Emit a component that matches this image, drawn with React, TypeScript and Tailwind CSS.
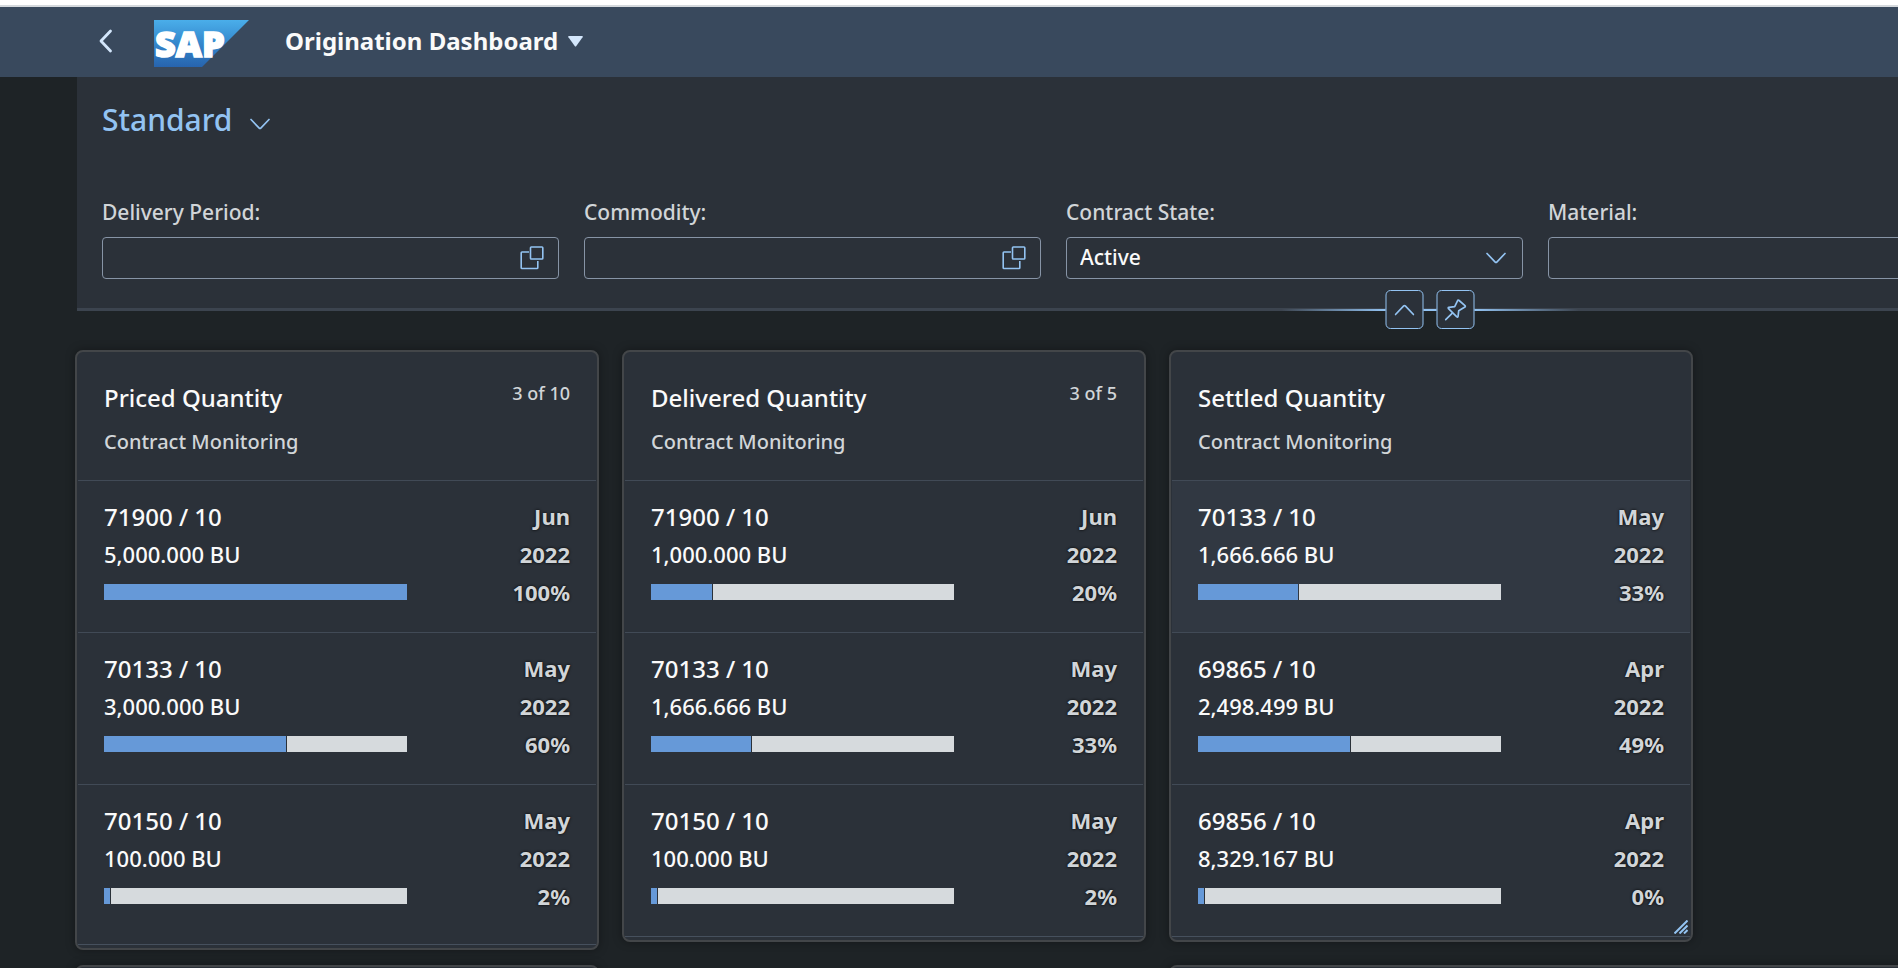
import React from "react";

type Item = { id: string; qty: string; month: string; year: string; pct: string; fill: number; active?: boolean };
type CardData = { title: string; subtitle: string; count?: string; items: Item[]; tall?: boolean; resizable?: boolean };

const CARDS: CardData[] = [
  {
    title: "Priced Quantity",
    subtitle: "Contract Monitoring",
    count: "3 of 10",
    tall: true,
    items: [
      { id: "71900 / 10", qty: "5,000.000 BU", month: "Jun", year: "2022", pct: "100%", fill: 100 },
      { id: "70133 / 10", qty: "3,000.000 BU", month: "May", year: "2022", pct: "60%", fill: 60 },
      { id: "70150 / 10", qty: "100.000 BU", month: "May", year: "2022", pct: "2%", fill: 2 },
    ],
  },
  {
    title: "Delivered Quantity",
    subtitle: "Contract Monitoring",
    count: "3 of 5",
    items: [
      { id: "71900 / 10", qty: "1,000.000 BU", month: "Jun", year: "2022", pct: "20%", fill: 20 },
      { id: "70133 / 10", qty: "1,666.666 BU", month: "May", year: "2022", pct: "33%", fill: 33 },
      { id: "70150 / 10", qty: "100.000 BU", month: "May", year: "2022", pct: "2%", fill: 2 },
    ],
  },
  {
    title: "Settled Quantity",
    subtitle: "Contract Monitoring",
    resizable: true,
    items: [
      { id: "70133 / 10", qty: "1,666.666 BU", month: "May", year: "2022", pct: "33%", fill: 33, active: true },
      { id: "69865 / 10", qty: "2,498.499 BU", month: "Apr", year: "2022", pct: "49%", fill: 50 },
      { id: "69856 / 10", qty: "8,329.167 BU", month: "Apr", year: "2022", pct: "0%", fill: 0 },
    ],
  },
];

function Chevron({ up = false, className = "" }: { up?: boolean; className?: string }) {
  return (
    <svg width="20" height="12" viewBox="0 0 20 12" fill="none" stroke="currentColor" strokeWidth="1.7" strokeLinecap="round" className={className} aria-hidden="true">
      <path d={up ? "M1 10.5 L9.2 1.9 Q10 1.2 10.8 1.9 L19 10.5" : "M1 1.5 L9.2 10.1 Q10 10.8 10.8 10.1 L19 1.5"} />
    </svg>
  );
}

function ValueHelpIcon() {
  return (
    <svg width="24" height="24" viewBox="0 0 24 24" fill="none" stroke="currentColor" strokeWidth="1.6" aria-hidden="true">
      <rect x="10.5" y="1" width="12.3" height="12" rx="0.8" />
      <path d="M9 6 H2 Q1.2 6 1.2 6.8 V21.7 Q1.2 22.5 2 22.5 H17 Q17.8 22.5 17.8 21.7 V15" />
    </svg>
  );
}

function PinIcon() {
  return (
    <svg width="22" height="22" viewBox="0 0 22 22" fill="none" stroke="currentColor" strokeWidth="1.7" strokeLinejoin="round" strokeLinecap="round" aria-hidden="true">
      <path d="M10.2 7.6 L13 1.8 Q13.6 0.7 14.6 1.5 L20.5 6.6 Q21.4 7.4 20.4 8 L14.2 11.8 L13.6 17.2 Q13.4 18.9 12.1 17.7 L4 9.6 Q3.2 8.6 4.4 8.4 Z" />
      <path d="M7.6 14.4 L1.2 20.6" />
    </svg>
  );
}

function Logo() {
  return (
    <svg width="95" height="47" viewBox="0 0 95 47" role="img" aria-label="SAP" className="block overflow-visible">
      <defs>
        <linearGradient id="logo" x1="0" y1="0" x2="0" y2="1">
          <stop offset="0" stopColor="#4aaeea" />
          <stop offset="0.5" stopColor="#3487cc" />
          <stop offset="1" stopColor="#2764ae" />
        </linearGradient>
      </defs>
      <path d="M0 0 H95 L48 47 H0 Z" fill="url(#logo)" />
      <text x="1" y="37" fontFamily="Noto Sans, sans-serif" fontWeight="900" fontSize="36" fill="#fff" stroke="#fff" strokeWidth="1.6">
        SAP
      </text>
    </svg>
  );
}

const FIELD = "flex h-[42px] items-center rounded-[4px] border border-[#8794a6]";

function Label({ id, children }: { id: string; children: React.ReactNode }) {
  return (
    <label htmlFor={id} className="mb-3 block text-[21px] leading-[26px] text-[#d1d5d8]">
      {children}
    </label>
  );
}

function TextField({ id, label }: { id: string; label: string }) {
  return (
    <div className="w-[457px] shrink-0">
      <Label id={id}>{label}</Label>
      <div className={FIELD}>
        <input id={id} type="text" className="h-full min-w-0 flex-1 bg-transparent px-3 text-[21px] text-[#fafafa] outline-none" />
        <button type="button" aria-label={`Select ${label}`} className="mr-[14px] text-[#93c3f2]">
          <ValueHelpIcon />
        </button>
      </div>
    </div>
  );
}

function Row({ item }: { item: Item }) {
  return (
    <li className={`flex h-[152px] justify-between border-t border-[#414a56] px-[26px] pt-4 ${item.active ? "bg-[#313842]" : ""}`}>
      <div className="w-[303px]">
        <div className="text-2xl leading-10 text-[#fafafa]">{item.id}</div>
        <div className="text-[22px] leading-[34px] text-[#fafafa]">{item.qty}</div>
        <div className="mt-[13px] flex h-4 gap-px">
          <div className="min-w-[6px] bg-[#6699d8]" style={{ width: `${item.fill}%` }} />
          {item.fill < 100 && <div className="flex-1 bg-[#d6dadd]" />}
        </div>
      </div>
      <div className="text-right text-[22px] leading-[38px] font-bold text-[#d1d5d8] [text-shadow:0_0_3px_#000]">
        <div>{item.month}</div>
        <div>{item.year}</div>
        <div>{item.pct}</div>
      </div>
    </li>
  );
}

const SHELL = "rounded-lg border-2 border-[#434649] bg-[#2b3139] shadow-[0_0_10px_rgba(0,0,0,0.35)]";

function Card({ card }: { card: CardData }) {
  return (
    <section className={`relative w-[524px] shrink-0 px-px ${SHELL}`}>
      <header className="flex h-[128px] justify-between px-[26px] pt-8">
        <div>
          <h2 className="text-2xl leading-7 text-[#fafafa]">{card.title}</h2>
          <p className="mt-4 text-xl leading-7 text-[#d1d5d8]">{card.subtitle}</p>
        </div>
        {card.count && <span className="-mt-[3px] text-lg leading-6 text-[#d1d5d8]">{card.count}</span>}
      </header>
      <ul className={`mb-[3px] border-b border-[#46505d] ${card.tall ? "pb-2" : ""}`}>
        {card.items.map((item) => (
          <Row key={item.id} item={item} />
        ))}
      </ul>
      {card.resizable && (
        <svg className="absolute right-[3px] bottom-[6px] text-[#93c3f2]" width="14" height="14" viewBox="0 0 14 14" fill="none" stroke="currentColor" strokeWidth="2" aria-hidden="true">
          <path d="M0.5 13.5 L13.5 0.5 M5.5 13.5 L13.5 5.5 M10 13.5 L13.5 10" />
        </svg>
      )}
    </section>
  );
}

export default function App() {
  return (
    <div className="flex h-screen flex-col overflow-hidden bg-[#1e2326] font-['Noto_Sans',Roboto,sans-serif] font-medium">
      <div className="h-[7px] shrink-0 border-b-2 border-[#d5d9dd] bg-white" />
      <header className="flex h-[70px] shrink-0 items-center bg-[#39495d] pl-[98px]">
        <button type="button" aria-label="Back" className="text-[#d3e6fb]">
          <svg width="15" height="24" viewBox="0 0 15 24" fill="none" stroke="currentColor" strokeWidth="2.8" strokeLinecap="round" strokeLinejoin="round" className="-mt-0.5">
            <path d="M12.5 2 L3 12 L12.5 22" />
          </svg>
        </button>
        <a href="#home" className="mt-0.5 ml-[41px]">
          <Logo />
        </a>
        <button type="button" className="mb-0.5 ml-9 flex items-center gap-[10px] text-2xl font-bold text-[#fafafa]">
          Origination Dashboard
          <svg width="15" height="11" viewBox="0 0 15 11" fill="#d3e6fb" aria-hidden="true">
            <path d="M0.8 0 H14.2 Q15.2 0.2 14.6 1.2 L8.3 10 Q7.5 11 6.7 10 L0.4 1.2 Q-0.2 0.2 0.8 0 Z" />
          </svg>
        </button>
      </header>

      <section className="relative ml-[77px] h-[234px] shrink-0 border-b-[3px] border-[#3c444f] bg-[#2b3139] pt-[23px] pl-[25px]">
        <button type="button" className="flex items-center gap-[18px] text-3xl leading-10 text-[#93c3f2]">
          Standard
          <Chevron className="mt-2" />
        </button>
        <form className="mt-[59px] flex gap-[25px] overflow-hidden">
          <TextField id="period" label="Delivery Period:" />
          <TextField id="commodity" label="Commodity:" />
          <div className="w-[457px] shrink-0">
            <Label id="state">Contract State:</Label>
            <div className={`relative ${FIELD}`}>
              <select id="state" className="h-full w-full appearance-none bg-transparent px-[13px] text-[21px] text-[#fafafa] outline-none">
                <option>Active</option>
              </select>
              <Chevron className="pointer-events-none absolute right-4 text-[#93c3f2]" />
            </div>
          </div>
          <TextField id="material" label="Material:" />
        </form>
        <div className="absolute -bottom-[21px] left-[74.3%] flex -translate-x-1/2 items-center text-[#93c3f2]">
          <div className="h-[2px] w-[104px] bg-linear-to-r from-transparent to-[#93c3f2]" />
          <button type="button" aria-label="Collapse header" className="flex h-[39px] w-[38px] items-center justify-center rounded-[5px] border border-[#93c3f2] bg-[#2b3139]">
            <Chevron up />
          </button>
          <div className="h-[2px] w-[13px] bg-[#93c3f2]" />
          <button type="button" aria-label="Pin header" className="flex h-[39px] w-[38px] items-center justify-center rounded-[5px] border border-[#93c3f2] bg-[#2b3139]">
            <PinIcon />
          </button>
          <div className="h-[2px] w-[104px] bg-linear-to-r from-[#93c3f2] to-transparent" />
        </div>
      </section>

      <main className="mt-[39px] ml-[75px]">
        <div className="flex h-[615px] items-start gap-[23px]">
          {CARDS.map((card) => (
            <Card key={card.title} card={card} />
          ))}
        </div>
        <div className="flex gap-[23px]">
          <div className={`h-10 w-[524px] shrink-0 ${SHELL}`} />
          <div className="w-[524px] shrink-0" />
          <div className={`h-10 w-[1071px] shrink-0 ${SHELL}`} />
        </div>
      </main>
    </div>
  );
}
